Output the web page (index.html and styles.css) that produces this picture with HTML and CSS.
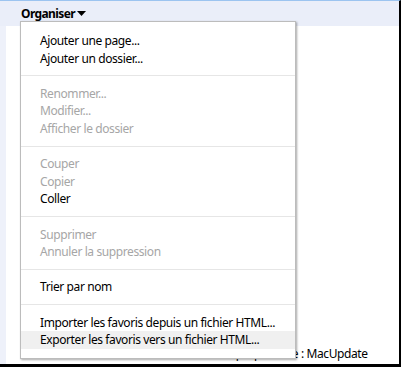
FILE: index.html
```html
<!DOCTYPE html>
<html lang="fr">
<head>
  <meta charset="UTF-8" />
  <title>Favoris</title>
  <link rel="stylesheet" href="styles.css">
</head>
<body>
  <div class="window">
    <div class="toolbar">
      <button class="organise-btn">Organiser
        <svg class="caret" width="9" height="5" viewBox="0 0 9 5"><path d="M0 0h9L4.5 5z" fill="#000"/></svg>
      </button>
    </div>
    <div class="content">
      <div class="side"></div>
      <div class="main">
        <p class="pref-line">Nom du propriétaire : MacUpdate</p>
      </div>
    </div>

    <ul class="menu">
      <li class="item">Ajouter une page...</li>
      <li class="item">Ajouter un dossier...</li>
      <li class="sep"></li>
      <li class="item disabled">Renommer...</li>
      <li class="item disabled">Modifier...</li>
      <li class="item disabled">Afficher le dossier</li>
      <li class="sep"></li>
      <li class="item disabled">Couper</li>
      <li class="item disabled">Copier</li>
      <li class="item">Coller</li>
      <li class="sep"></li>
      <li class="item disabled">Supprimer</li>
      <li class="item disabled">Annuler la suppression</li>
      <li class="sep"></li>
      <li class="item">Trier par nom</li>
      <li class="sep"></li>
      <li class="item">Importer les favoris depuis un fichier HTML...</li>
      <li class="item hover">Exporter les favoris vers un fichier HTML...</li>
    </ul>
  </div>
</body>
</html>
```

FILE: styles.css
```css
html, body {
  margin: 0;
  padding: 0;
}

body {
  font-family: 'Noto Sans', 'Open Sans', sans-serif;
  font-size: 12px;
  letter-spacing: -0.4px;
  color: #000;
  background: #fff;
}

.window {
  position: relative;
  width: 401px;
  height: 367px;
  box-sizing: border-box;
  border-top: 1px solid #9cc4f0;
  border-right: 2px solid #000;
  border-bottom: 3px solid #000;
  display: flex;
  flex-direction: column;
  overflow: hidden;
}

.toolbar {
  height: 25px;
  background: #eaeef9;
  flex-shrink: 0;
  display: flex;
  align-items: flex-start;
  padding-left: 21px;
}

.organise-btn {
  border: 0;
  background: none;
  padding: 0;
  margin-top: 4px;
  font-family: inherit;
  font-size: 12px;
  font-weight: bold;
  letter-spacing: -0.6px;
  color: #000;
  display: flex;
  align-items: center;
  gap: 2px;
  line-height: 17px;
}

.caret {
  display: block;
}

.content {
  flex: 1;
  display: flex;
}

.side {
  width: 6px;
  background: #eef1fa;
}

.main {
  flex: 1;
  display: flex;
  flex-direction: column;
  justify-content: flex-end;
}

.pref-line {
  margin: 0 0 2px 0;
  padding-left: 184px;
  line-height: 17px;
  white-space: nowrap;
}

.menu {
  position: absolute;
  left: 20px;
  top: 20px;
  width: 274px;
  margin: 0;
  padding: 10px 0 9px 0;
  list-style: none;
  background: #fff;
  border: 1px solid #bcbcbc;
  box-shadow: 1px 1px 2px rgba(0, 0, 0, 0.35);
}

.item {
  height: 17.6px;
  line-height: 17.6px;
  padding-left: 19px;
  white-space: nowrap;
}

.item.disabled {
  color: #a6a6a6;
}

.item.hover {
  background: #f0f0f0;
}

.sep {
  height: 1px;
  background: #e6e6e6;
  margin: 8.3px 0;
}
```
